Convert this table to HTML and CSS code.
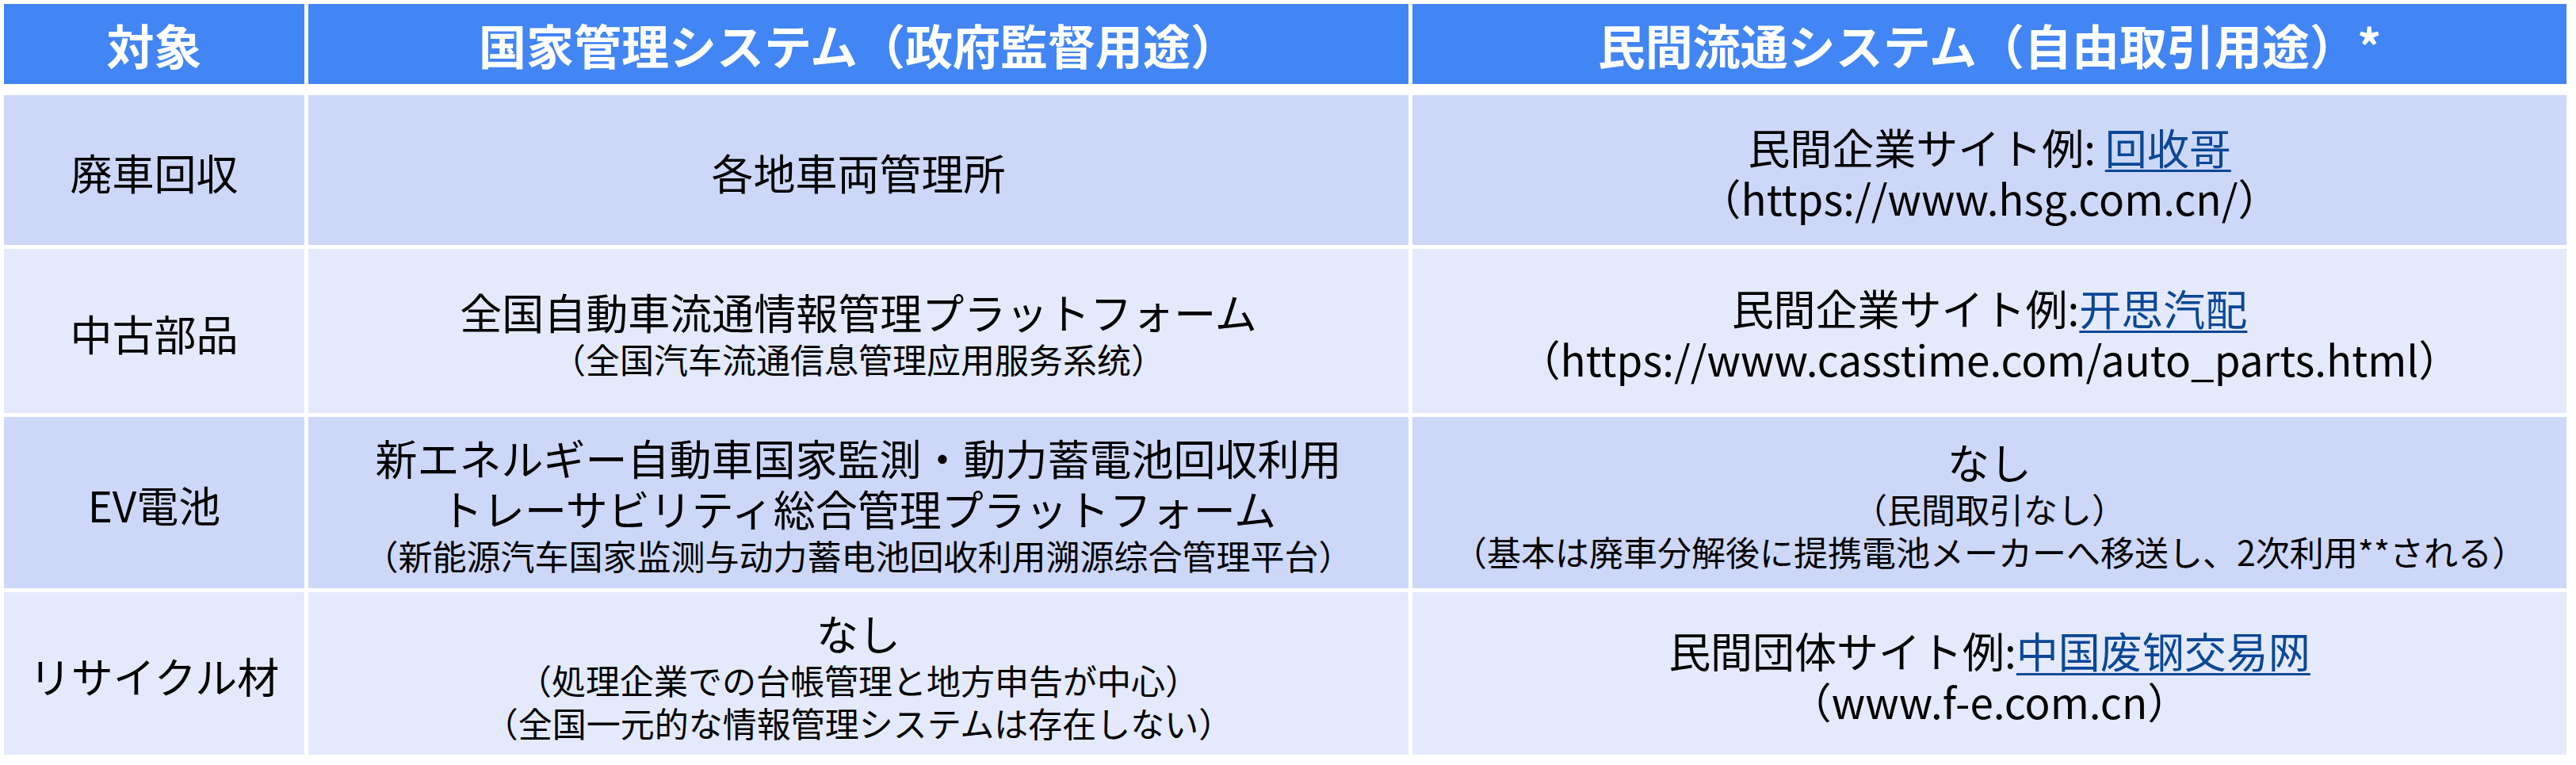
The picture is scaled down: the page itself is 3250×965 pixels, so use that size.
FILE: index.html
```html
<!DOCTYPE html>
<html lang="ja">
<head>
<meta charset="utf-8">
<title>対象別システム比較</title>
<link rel="stylesheet" href="styles.css">
</head>
<body>
<div class="page">
  <div class="grid head">
    <div class="cell hcell">対象</div>
    <div class="cell hcell">国家管理システム（政府監督用途）</div>
    <div class="cell hcell">民間流通システム（自由取引用途）*</div>
  </div>
  <div class="grid body">
    <div class="cell dark"><span class="big">廃車回収</span></div>
    <div class="cell dark"><span class="big">各地車両管理所</span></div>
    <div class="cell dark">
      <span class="big">民間企業サイト例: <a class="lnk" href="#">回收哥</a></span>
      <span class="big">（https://www.hsg.com.cn/）</span>
    </div>

    <div class="cell light"><span class="big">中古部品</span></div>
    <div class="cell light">
      <span class="big">全国自動車流通情報管理プラットフォーム</span>
      <span class="small">（全国汽车流通信息管理应用服务系统）</span>
    </div>
    <div class="cell light">
      <span class="big">民間企業サイト例:<a class="lnk" href="#">开思汽配</a></span>
      <span class="big">（https://www.casstime.com/auto_parts.html）</span>
    </div>

    <div class="cell dark"><span class="big">EV電池</span></div>
    <div class="cell dark">
      <span class="big">新エネルギー自動車国家監測・動力蓄電池回収利用</span>
      <span class="big">トレーサビリティ総合管理プラットフォーム</span>
      <span class="small">（新能源汽车国家监测与动力蓄电池回收利用溯源综合管理平台）</span>
    </div>
    <div class="cell dark">
      <span class="big">なし</span>
      <span class="small">（民間取引なし）</span>
      <span class="small">（基本は廃車分解後に提携電池メーカーへ移送し、2次利用**される）</span>
    </div>

    <div class="cell light"><span class="big">リサイクル材</span></div>
    <div class="cell light">
      <span class="big">なし</span>
      <span class="small">（処理企業での台帳管理と地方申告が中心）</span>
      <span class="small">（全国一元的な情報管理システムは存在しない）</span>
    </div>
    <div class="cell light">
      <span class="big">民間団体サイト例:<a class="lnk" href="#">中国废钢交易网</a></span>
      <span class="big">（www.f-e.com.cn）</span>
    </div>
  </div>
</div>
</body>
</html>
```

FILE: styles.css
```css
html, body {
  margin: 0;
  padding: 0;
  background: #ffffff;
}

body {
  font-family: "Noto Sans CJK JP", "Noto Sans", sans-serif;
  color: #000000;
}

.page {
  padding: 5px 0 0 5px;
  display: flex;
  flex-direction: column;
  gap: 14px;
  width: 3233px;
}

.grid {
  display: grid;
  grid-template-columns: 379px 1388px 1456px;
  column-gap: 5px;
}

.head {
  grid-template-rows: 101px;
}

.body {
  grid-template-rows: 189px 207px 216px 205px;
  row-gap: 5px;
}

.cell {
  display: flex;
  flex-direction: column;
  align-items: center;
  justify-content: center;
  text-align: center;
  white-space: nowrap;
  padding-top: 4px;
  box-sizing: border-box;
}

.hcell {
  background: #4285f4;
  color: #ffffff;
  font-weight: 700;
  font-size: 60px;
  line-height: 1.2;
  padding-top: 0;
}

.dark {
  background: #cdd8f8;
}

.light {
  background: #e4eafb;
}

.big {
  display: block;
  font-size: 53px;
  line-height: 64px;
}

.small {
  display: block;
  font-size: 43px;
  line-height: 54px;
}

.lnk {
  color: #0b4796;
  text-decoration: underline;
  text-decoration-thickness: 3px;
  text-underline-offset: 6px;
}
```
